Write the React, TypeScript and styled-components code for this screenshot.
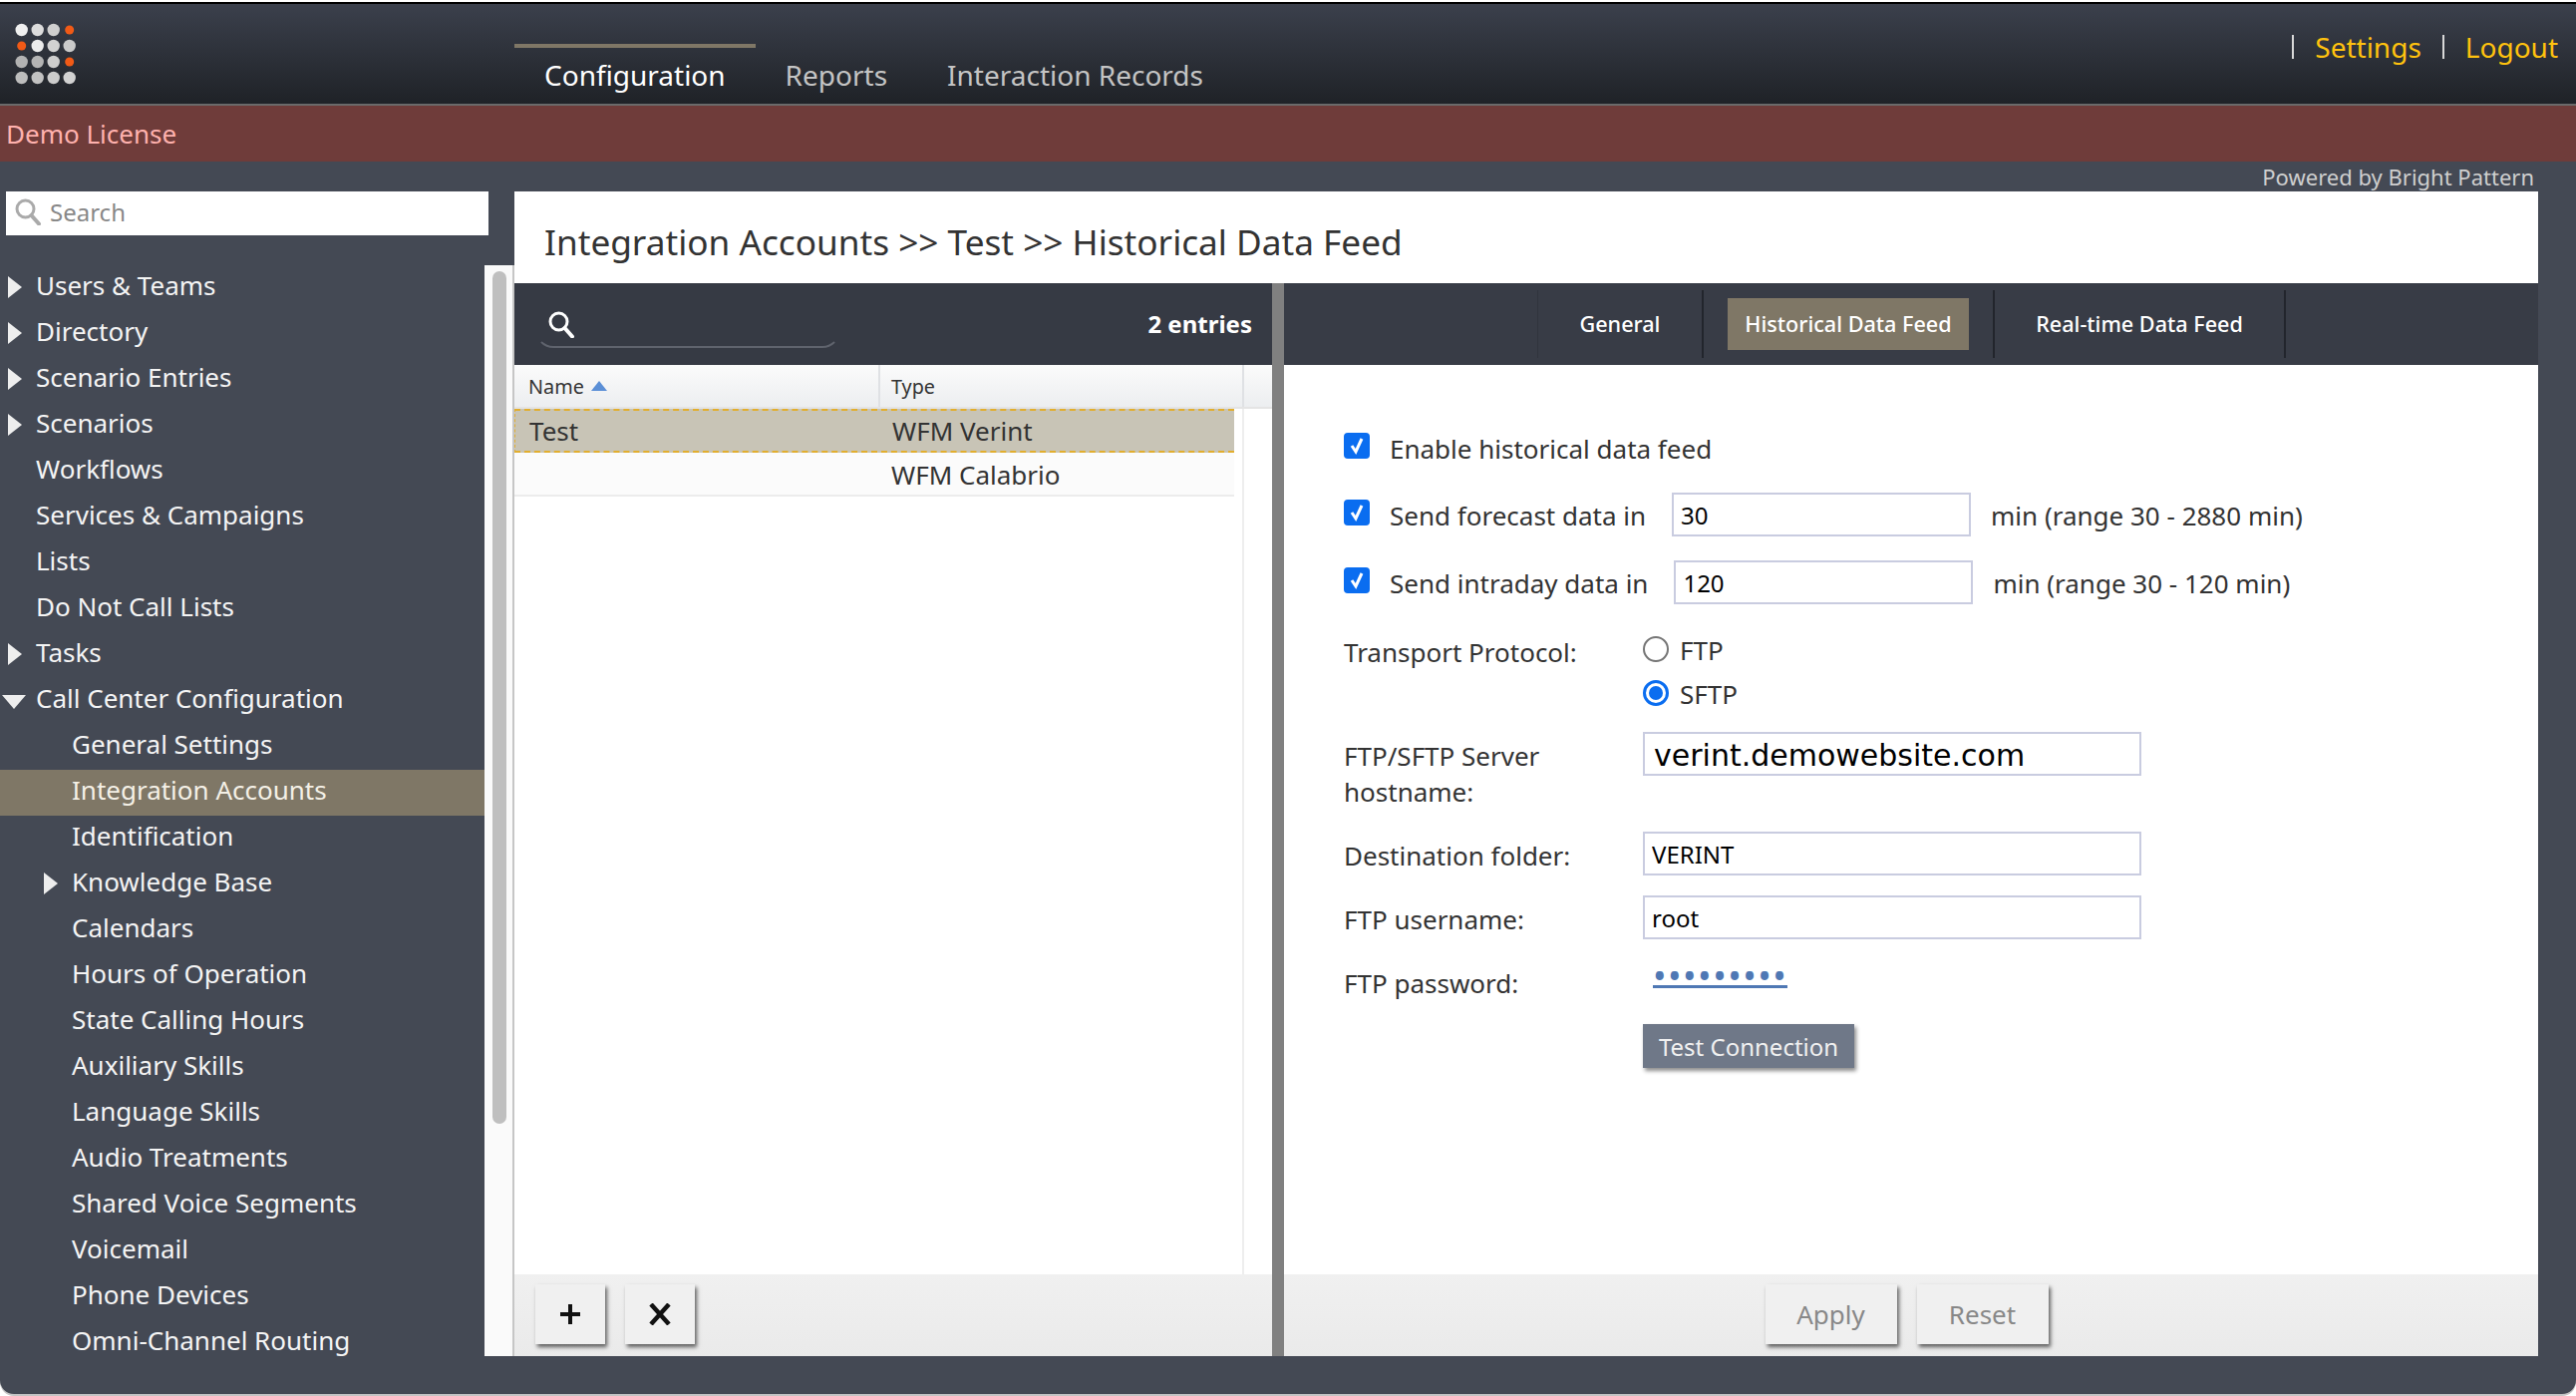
import React from 'react';
import styled, { createGlobalStyle } from 'styled-components';

const GlobalStyle = createGlobalStyle`
  html, body {
    margin: 0;
    padding: 0;
    background: #fff;
    overflow: hidden;
  }
  * {
    box-sizing: border-box;
  }
`;

// Page frame
const Page = styled.div`
  width: 2584px;
  height: 1400px;
  padding-top: 2px;
  font-family: 'Noto Sans', 'Open Sans', sans-serif;
  background: #fff;
`;

const Frame = styled.div`
  height: 1396px;
  display: flex;
  flex-direction: column;
  background: #444954;
  border-top: 2px solid #000;
  border-radius: 0 0 14px 14px;
  box-shadow: 0 2px 0 #c4c4c4;
`;

// Top bar
const Header = styled.header`
  height: 102px;
  flex-shrink: 0;
  display: flex;
  background: linear-gradient(#3b404c, #1f2227);
  border-bottom: 2px solid #6a6a6a;
`;

const LogoBox = styled.div`
  width: 516px;
  flex-shrink: 0;
`;

const NavTab = styled.div<{ $active?: boolean }>`
  margin-top: 40px;
  height: 60px;
  padding: 3px 30px 0 30px;
  border-top: 4px solid ${(p) => (p.$active ? '#7f7766' : 'transparent')};
  font-size: 28px;
  line-height: 48px;
  color: ${(p) => (p.$active ? '#ffffff' : '#c4c4c4')};
`;

const UserLinks = styled.div`
  margin-left: auto;
  padding: 16px 18px 0 0;
  height: 70px;
  display: flex;
  align-items: center;
  gap: 21px;
  font-size: 28px;
  color: #ffc20e;
`;

const LinkDivider = styled.span`
  width: 2px;
  height: 24px;
  background: #d8d8d8;
`;

const LicenseBar = styled.div`
  height: 56px;
  flex-shrink: 0;
  padding-left: 6px;
  display: flex;
  align-items: center;
  background: #6f3c3a;
  color: #ffb2ae;
  font-size: 26px;
`;

const PoweredBar = styled.div`
  height: 30px;
  flex-shrink: 0;
  padding-right: 42px;
  display: flex;
  justify-content: flex-end;
  align-items: center;
  font-size: 22px;
  color: #cfcfcf;
`;

const Workspace = styled.div`
  flex: 1;
  min-height: 0;
  display: flex;
  padding: 0 38px 38px 0;
`;

// Left tree
const Sidebar = styled.aside`
  width: 516px;
  flex-shrink: 0;
  display: flex;
  flex-direction: column;
`;

const SearchBox = styled.div`
  margin-left: 6px;
  width: 484px;
  height: 44px;
  flex-shrink: 0;
  padding: 0 0 4px 8px;
  display: flex;
  align-items: center;
  gap: 8px;
  background: #fff;
  font-size: 24px;
  color: #888;
`;

const TreeArea = styled.div`
  flex: 1;
  min-height: 0;
  margin-top: 30px;
  display: flex;
`;

const TreeList = styled.div`
  width: 486px;
`;

const TreeRow = styled.div<{ $level: number; $selected?: boolean }>`
  height: 46px;
  position: relative;
  padding: 0 0 6px ${(p) => (p.$level ? 72 : 36)}px;
  display: flex;
  align-items: center;
  font-size: 26px;
  color: ${(p) => (p.$selected ? '#f4f0e6' : '#f4f4f4')};
  background: ${(p) => (p.$selected ? '#7f7766' : 'transparent')};
`;

const Arrow = styled.svg<{ $left: number }>`
  position: absolute;
  left: ${(p) => p.$left}px;
  top: 11px;
`;

const ScrollGutter = styled.div`
  width: 30px;
  padding: 6px 6px 0 8px;
  background: #fafafa;
  border-right: 2px solid #c6c6c6;
`;

const ScrollThumb = styled.div`
  height: 855px;
  border-radius: 8px;
  background: #bfbfbf;
`;

// Main panel
const Panel = styled.main`
  flex: 1;
  display: flex;
  flex-direction: column;
  background: #fff;
`;

const PanelTitle = styled.h1`
  margin: 0;
  height: 92px;
  flex-shrink: 0;
  padding: 8px 0 0 30px;
  display: flex;
  align-items: center;
  font-size: 35.2px;
  font-weight: 400;
  color: #333;
`;

const Split = styled.div`
  flex: 1;
  min-height: 0;
  display: flex;
`;

const ListPane = styled.section`
  width: 760px;
  flex-shrink: 0;
  display: flex;
  flex-direction: column;
`;

const Splitter = styled.div`
  width: 12px;
  flex-shrink: 0;
  background: #808080;
`;

const DetailPane = styled.section`
  flex: 1;
  display: flex;
  flex-direction: column;
`;

const ListToolbar = styled.div`
  height: 82px;
  flex-shrink: 0;
  padding: 0 20px 0 21px;
  display: flex;
  align-items: center;
  justify-content: space-between;
  background: #363a44;
`;

const FilterBox = styled.div`
  width: 306px;
  height: 50px;
  margin-top: -2px;
  padding: 2px 0 0 10px;
  display: flex;
  align-items: center;
  border: 2px solid transparent;
  border-bottom-color: #5f636d;
  border-radius: 0 0 18px 18px;
`;

const EntryCount = styled.div`
  margin-top: -2px;
  font-size: 24px;
  font-weight: 700;
  color: #fff;
`;

const TableHeader = styled.div`
  height: 44px;
  flex-shrink: 0;
  display: flex;
  background: linear-gradient(#fbfbfb, #eceef0);
  border-bottom: 2px solid #e4e4e4;
`;

const HeaderCell = styled.div<{ $width: number; $inset: number }>`
  width: ${(p) => p.$width}px;
  padding-left: ${(p) => p.$inset}px;
  display: flex;
  align-items: center;
  gap: 7px;
  border-right: 2px solid #dfe1e4;
  font-size: 19.8px;
  color: #333;
`;

const TableBody = styled.div`
  flex: 1;
  min-height: 0;
  display: flex;
`;

const Rows = styled.div`
  width: 722px;
`;

const RowFiller = styled.div`
  width: 10px;
  border-right: 2px solid #eeeeee;
`;

const DataRow = styled.div<{ $selected?: boolean }>`
  height: 44px;
  display: grid;
  grid-template-columns: 378px 1fr;
  align-items: center;
  font-size: 26px;
  color: #333;
  background: ${(p) => (p.$selected ? '#c8c4b6' : '#fbfbfb')};
  border-top: 2px ${(p) => (p.$selected ? 'dashed #e2ae2e' : 'solid #fbfbfb')};
  border-bottom: 2px ${(p) => (p.$selected ? 'dashed #e2ae2e' : 'solid #ececec')};
  ${(p) => (p.$selected ? 'border-left: 1px dashed #e2ae2e;' : '')}
`;

const DataCell = styled.div<{ $first?: boolean }>`
  padding-left: ${(p) => (p.$first ? 14 : 0)}px;
`;

const Footer = styled.div<{ $center?: boolean }>`
  height: 82px;
  flex-shrink: 0;
  padding: 10px ${(p) => (p.$center ? 30 : 21)}px 0 21px;
  display: flex;
  justify-content: ${(p) => (p.$center ? 'center' : 'flex-start')};
  gap: 20px;
  background: linear-gradient(#f0f0f0, #eaeaea);
`;

const SquareButton = styled.button`
  width: 70px;
  height: 60px;
  padding: 0;
  display: flex;
  align-items: center;
  justify-content: center;
  border: none;
  background: #f0f0f0;
  box-shadow: 2px 3px 4px rgba(0, 0, 0, 0.6);
`;

const TextButton = styled.button`
  width: 132px;
  height: 60px;
  padding: 0;
  border: none;
  background: #f0f0f0;
  box-shadow: 2px 3px 4px rgba(0, 0, 0, 0.6);
  font-family: inherit;
  font-size: 26px;
  color: #888;
`;

// Tabs of the detail pane
const TabBar = styled.div`
  height: 82px;
  flex-shrink: 0;
  padding-left: 254px;
  display: flex;
  align-items: center;
  background: #383c46;
`;

const Tab = styled.div<{ $width: number; $first?: boolean }>`
  width: ${(p) => p.$width}px;
  height: 68px;
  display: flex;
  align-items: center;
  justify-content: center;
  border-right: 2px solid #22252c;
  ${(p) => (p.$first ? 'border-left: 1px solid #30343d;' : '')}
`;

const TabLabel = styled.span<{ $active?: boolean }>`
  height: 52px;
  padding: 0 17px 2px;
  display: flex;
  align-items: center;
  font-size: 21.6px;
  font-weight: 500;
  color: #fff;
  background: ${(p) => (p.$active ? '#7f7766' : 'transparent')};
`;

// Form
const Form = styled.div`
  flex: 1;
  min-height: 0;
  padding: 61px 0 0 60px;
  font-size: 26px;
  color: #333;
`;

const CheckRow = styled.div<{ $top?: number }>`
  height: 44px;
  margin-top: ${(p) => p.$top ?? 0}px;
  display: flex;
  align-items: center;
`;

const CheckBox = styled.span`
  width: 26px;
  height: 26px;
  margin: -5px 20px 0 0;
  flex-shrink: 0;
  display: flex;
  align-items: center;
  justify-content: center;
  border-radius: 4px;
  background: #0a6df0;
`;

const CheckText = styled.span`
  padding-top: 2px;
`;

const TextField = styled.input<{ $width: number; $large?: boolean }>`
  width: ${(p) => p.$width}px;
  height: 44px;
  padding: ${(p) => (p.$large ? '2px 0 0 9px' : '0 0 0 7px')};
  border: 2px solid #c9cce0;
  border-radius: 0;
  outline: none;
  background: #fff;
  font-family: ${(p) => (p.$large ? "'DejaVu Sans'" : "'Noto Sans'")}, sans-serif;
  font-size: ${(p) => (p.$large ? 30 : 24)}px;
  color: #000;
`;

const InlineField = styled.div<{ $left: number }>`
  margin-left: ${(p) => p.$left}px;
  display: flex;
`;

const Hint = styled.span`
  margin-left: 20px;
  padding-top: 2px;
`;

const FieldRow = styled.div<{ $top: number; $height?: number }>`
  margin-top: ${(p) => p.$top}px;
  min-height: ${(p) => p.$height ?? 44}px;
  display: grid;
  grid-template-columns: 300px 1fr;
  align-items: start;
`;

const FieldLabel = styled.div<{ $inset?: number }>`
  padding-top: ${(p) => p.$inset ?? 6}px;
  line-height: 36px;
`;

const RadioGroup = styled.div`
  display: flex;
  flex-direction: column;
`;

const RadioRow = styled.div`
  height: 44px;
  display: flex;
  align-items: center;
  gap: 11px;
`;

const RadioText = styled.span`
  padding-top: 2px;
`;

const Radio = styled.span<{ $on?: boolean }>`
  width: 26px;
  height: 26px;
  display: flex;
  align-items: center;
  justify-content: center;
  border-radius: 50%;
  border: ${(p) => (p.$on ? '3px solid #0a6df0' : '2px solid #767676')};
  &::after {
    content: '';
    width: 14px;
    height: 14px;
    border-radius: 50%;
    background: ${(p) => (p.$on ? '#0a6df0' : 'transparent')};
  }
`;

const PasswordDots = styled.span`
  display: inline-block;
  margin-left: 10px;
  height: 29px;
  border-bottom: 3px solid #4f78b4;
  font-size: 36px;
  line-height: 34px;
  letter-spacing: 1.5px;
  color: #4f78b4;
`;

const ActionButton = styled.button`
  width: 212px;
  height: 44px;
  padding: 0;
  border: none;
  background: #6f7888;
  box-shadow: 2px 3px 4px rgba(0, 0, 0, 0.45);
  font-family: inherit;
  font-size: 24px;
  color: #f0f0f0;
`;

const treeItems: { label: string; level: number; arrow?: 'right' | 'down'; selected?: boolean }[] = [
  { label: 'Users & Teams', level: 0, arrow: 'right' },
  { label: 'Directory', level: 0, arrow: 'right' },
  { label: 'Scenario Entries', level: 0, arrow: 'right' },
  { label: 'Scenarios', level: 0, arrow: 'right' },
  { label: 'Workflows', level: 0 },
  { label: 'Services & Campaigns', level: 0 },
  { label: 'Lists', level: 0 },
  { label: 'Do Not Call Lists', level: 0 },
  { label: 'Tasks', level: 0, arrow: 'right' },
  { label: 'Call Center Configuration', level: 0, arrow: 'down' },
  { label: 'General Settings', level: 1 },
  { label: 'Integration Accounts', level: 1, selected: true },
  { label: 'Identification', level: 1 },
  { label: 'Knowledge Base', level: 1, arrow: 'right' },
  { label: 'Calendars', level: 1 },
  { label: 'Hours of Operation', level: 1 },
  { label: 'State Calling Hours', level: 1 },
  { label: 'Auxiliary Skills', level: 1 },
  { label: 'Language Skills', level: 1 },
  { label: 'Audio Treatments', level: 1 },
  { label: 'Shared Voice Segments', level: 1 },
  { label: 'Voicemail', level: 1 },
  { label: 'Phone Devices', level: 1 },
  { label: 'Omni-Channel Routing', level: 1 },
];

const logoDots = [
  ['#f0f0f0', '#dcdcdc', '#cfcfcf', 'o'],
  ['o', '#ececec', '#d2d2d2', '#cbcbcb'],
  ['#b2b2b2', '#b4b4b4', '#cdcdcd', 'o'],
  ['#bdbdbd', '#c2c2c2', '#cccccc', '#d2d2d2'],
];

function Logo() {
  return (
    <svg width="100" height="100" viewBox="0 0 100 100">
      {logoDots.map((row, r) =>
        row.map((c, i) => (
          <circle
            key={`${r}-${i}`}
            cx={21.7 + i * 16}
            cy={26 + r * 16}
            r={c === 'o' ? 4.5 : 6.2}
            fill={c === 'o' ? '#f15a16' : c}
          />
        ))
      )}
    </svg>
  );
}

function SearchIcon({ color, size, width }: { color: string; size: number; width: number }) {
  return (
    <svg width={size} height={size} viewBox="0 0 28 28" fill="none" stroke={color} strokeWidth={width}>
      <circle cx="11.5" cy="11.5" r="8.5" />
      <path d="M17.5 18 L25 26.5" strokeWidth={width + 1} strokeLinecap="round" />
    </svg>
  );
}

function TreeArrow({ kind, level }: { kind: 'right' | 'down'; level: number }) {
  if (kind === 'down') {
    return (
      <Arrow $left={2} width="24" height="22" viewBox="0 0 24 22">
        <path d="M0 6 H24 L12 20 Z" fill="#eeeeee" />
      </Arrow>
    );
  }
  return (
    <Arrow $left={level ? 44 : 8} width="14" height="22" viewBox="0 0 14 22">
      <path d="M0 0 L14 11 L0 22 Z" fill="#eeeeee" />
    </Arrow>
  );
}

function Check() {
  return (
    <svg width="18" height="20" viewBox="0 0 18 20" fill="none">
      <path d="M4 10 L8 16 L14 3" stroke="#fff" strokeWidth="3" />
    </svg>
  );
}

export default function App() {
  return (
    <Page>
      <GlobalStyle />
      <Frame>
        <Header>
          <LogoBox>
            <Logo />
          </LogoBox>
          <NavTab $active>Configuration</NavTab>
          <NavTab>Reports</NavTab>
          <NavTab>Interaction Records</NavTab>
          <UserLinks>
            <LinkDivider />
            <span>Settings</span>
            <LinkDivider />
            <span>Logout</span>
          </UserLinks>
        </Header>
        <LicenseBar>Demo License</LicenseBar>
        <PoweredBar>Powered by Bright Pattern</PoweredBar>
        <Workspace>
          <Sidebar>
            <SearchBox>
              <SearchIcon color="#aaaaaa" size={28} width={3} />
              Search
            </SearchBox>
            <TreeArea>
              <TreeList>
                {treeItems.map((item) => (
                  <TreeRow key={item.label} $level={item.level} $selected={item.selected}>
                    {item.arrow && <TreeArrow kind={item.arrow} level={item.level} />}
                    {item.label}
                  </TreeRow>
                ))}
              </TreeList>
              <ScrollGutter>
                <ScrollThumb />
              </ScrollGutter>
            </TreeArea>
          </Sidebar>
          <Panel>
            <PanelTitle>Integration Accounts &gt;&gt; Test &gt;&gt; Historical Data Feed</PanelTitle>
            <Split>
              <ListPane>
                <ListToolbar>
                  <FilterBox>
                    <SearchIcon color="#ffffff" size={28} width={3} />
                  </FilterBox>
                  <EntryCount>2 entries</EntryCount>
                </ListToolbar>
                <TableHeader>
                  <HeaderCell $width={367} $inset={14}>
                    Name
                    <svg width="16" height="10" viewBox="0 0 16 10">
                      <path d="M8 0 L16 10 H0 Z" fill="#5b8fd6" />
                    </svg>
                  </HeaderCell>
                  <HeaderCell $width={365} $inset={11}>
                    Type
                  </HeaderCell>
                </TableHeader>
                <TableBody>
                  <Rows>
                    <DataRow $selected>
                      <DataCell $first>Test</DataCell>
                      <DataCell>WFM Verint</DataCell>
                    </DataRow>
                    <DataRow>
                      <DataCell $first />
                      <DataCell>WFM Calabrio</DataCell>
                    </DataRow>
                  </Rows>
                  <RowFiller />
                </TableBody>
                <Footer>
                  <SquareButton aria-label="add">
                    <svg width="22" height="22" viewBox="0 0 22 22">
                      <path d="M11 1 V21 M1 11 H21" stroke="#111" strokeWidth="4" />
                    </svg>
                  </SquareButton>
                  <SquareButton aria-label="remove">
                    <svg width="22" height="22" viewBox="0 0 22 22">
                      <path d="M2 1 L20 21 M20 1 L2 21" stroke="#111" strokeWidth="4.5" />
                    </svg>
                  </SquareButton>
                </Footer>
              </ListPane>
              <Splitter />
              <DetailPane>
                <TabBar>
                  <Tab $width={167} $first>
                    <TabLabel>General</TabLabel>
                  </Tab>
                  <Tab $width={292}>
                    <TabLabel $active>Historical Data Feed</TabLabel>
                  </Tab>
                  <Tab $width={292}>
                    <TabLabel>Real-time Data Feed</TabLabel>
                  </Tab>
                </TabBar>
                <Form>
                  <CheckRow>
                    <CheckBox>
                      <Check />
                    </CheckBox>
                    <CheckText>Enable historical data feed</CheckText>
                  </CheckRow>
                  <CheckRow $top={23}>
                    <CheckBox>
                      <Check />
                    </CheckBox>
                    <CheckText>Send forecast data in</CheckText>
                    <InlineField $left={26}>
                      <TextField $width={300} readOnly value="30" />
                    </InlineField>
                    <Hint>min (range 30 - 2880 min)</Hint>
                  </CheckRow>
                  <CheckRow $top={24}>
                    <CheckBox>
                      <Check />
                    </CheckBox>
                    <CheckText>Send intraday data in</CheckText>
                    <InlineField $left={26}>
                      <TextField $width={300} readOnly value="120" />
                    </InlineField>
                    <Hint>min (range 30 - 120 min)</Hint>
                  </CheckRow>
                  <FieldRow $top={23}>
                    <FieldLabel $inset={7}>Transport Protocol:</FieldLabel>
                    <RadioGroup>
                      <RadioRow>
                        <Radio />
                        <RadioText>FTP</RadioText>
                      </RadioRow>
                      <RadioRow>
                        <Radio $on />
                        <RadioText>SFTP</RadioText>
                      </RadioRow>
                    </RadioGroup>
                  </FieldRow>
                  <FieldRow $top={17} $height={80}>
                    <FieldLabel>
                      FTP/SFTP Server
                      <br />
                      hostname:
                    </FieldLabel>
                    <TextField $width={500} $large readOnly value="verint.demowebsite.com" />
                  </FieldRow>
                  <FieldRow $top={20}>
                    <FieldLabel>Destination folder:</FieldLabel>
                    <TextField $width={500} readOnly value="VERINT" />
                  </FieldRow>
                  <FieldRow $top={20}>
                    <FieldLabel>FTP username:</FieldLabel>
                    <TextField $width={500} readOnly value="root" />
                  </FieldRow>
                  <FieldRow $top={20} $height={44}>
                    <FieldLabel>FTP password:</FieldLabel>
                    <div>
                      <PasswordDots>•••••••••</PasswordDots>
                    </div>
                  </FieldRow>
                  <FieldRow $top={21}>
                    <div />
                    <div>
                      <ActionButton>Test Connection</ActionButton>
                    </div>
                  </FieldRow>
                </Form>
                <Footer $center>
                  <TextButton>Apply</TextButton>
                  <TextButton>Reset</TextButton>
                </Footer>
              </DetailPane>
            </Split>
          </Panel>
        </Workspace>
      </Frame>
    </Page>
  );
}
